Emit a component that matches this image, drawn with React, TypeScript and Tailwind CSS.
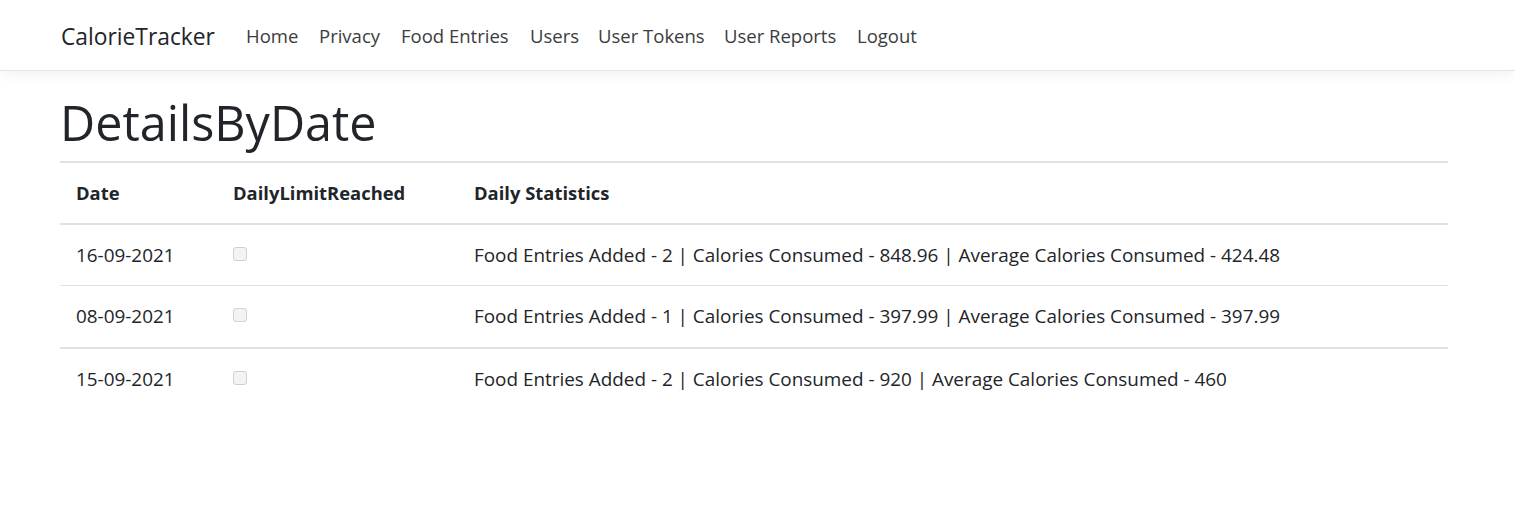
import React from 'react'

const links = [
  { label: 'Home', w: 'w-[73px]' },
  { label: 'Privacy', w: 'w-[82px]' },
  { label: 'Food Entries', w: 'w-[129px]' },
  { label: 'Users', w: 'w-[68px]' },
  { label: 'User Tokens', w: 'w-[126px]' },
  { label: 'User Reports', w: 'w-[133px]' },
  { label: 'Logout', w: 'w-[70px]' },
]

const rows = [
  {
    date: '16-09-2021',
    stats: 'Food Entries Added - 2 | Calories Consumed - 848.96 | Average Calories Consumed - 424.48',
    border: 'border-t-2',
  },
  {
    date: '08-09-2021',
    stats: 'Food Entries Added - 1 | Calories Consumed - 397.99 | Average Calories Consumed - 397.99',
    border: 'border-t',
  },
  {
    date: '15-09-2021',
    stats: 'Food Entries Added - 2 | Calories Consumed - 920 | Average Calories Consumed - 460',
    border: 'border-t-2',
  },
]

function Navbar() {
  return (
    <nav className="h-[71px] bg-white border-b border-[#e5e5e5] shadow-[0_4px_12px_rgba(0,0,0,0.05)]">
      <div className="pl-[61px] h-full flex items-center">
        <a className="w-[185px] text-[22.8px] leading-[30px] text-[#212529] pt-[4px]">CalorieTracker</a>
        <ul className="flex items-center pt-[2px]">
          {links.map((l) => (
            <li key={l.label} className={l.w}>
              <a className="text-[18.5px] leading-[26px] text-[#3a3d40]">{l.label}</a>
            </li>
          ))}
        </ul>
      </div>
    </nav>
  )
}

export default function App() {
  return (
    <div className="min-h-[518px] bg-white text-[#212529] font-['Segoe_UI','Open_Sans',sans-serif]">
      <Navbar />
      <main className="pl-[60px] w-[1448px]">
        <h1 className="mt-[25px] text-[48.5px] leading-[52px] font-medium text-[#212529]">
          DetailsByDate
        </h1>
        <div className="mt-[13px] border-t-2 border-[#dee2e6]">
          <div className="h-[60px] flex items-center font-bold text-[18.4px]">
            <div className="w-[157px] pl-[16px]">Date</div>
            <div className="w-[241px] pl-[16px]">DailyLimitReached</div>
            <div className="flex-1 pl-[16px]">Daily Statistics</div>
          </div>
          {rows.map((r) => (
            <div key={r.date} className={`${r.border} border-[#dee2e6] h-[62px] flex items-center text-[18.9px]`}>
              <div className="w-[157px] pl-[16px]">{r.date}</div>
              <div className="w-[241px] pl-[16px] flex items-center">
                <input
                  type="checkbox"
                  disabled
                  className="appearance-none w-[14px] h-[14px] -mt-[3px] rounded-[3px] border border-[#d0d0d0] bg-[#f3f3f3]"
                />
              </div>
              <div className="flex-1 pl-[16px]">{r.stats}</div>
            </div>
          ))}
        </div>
      </main>
    </div>
  )
}
